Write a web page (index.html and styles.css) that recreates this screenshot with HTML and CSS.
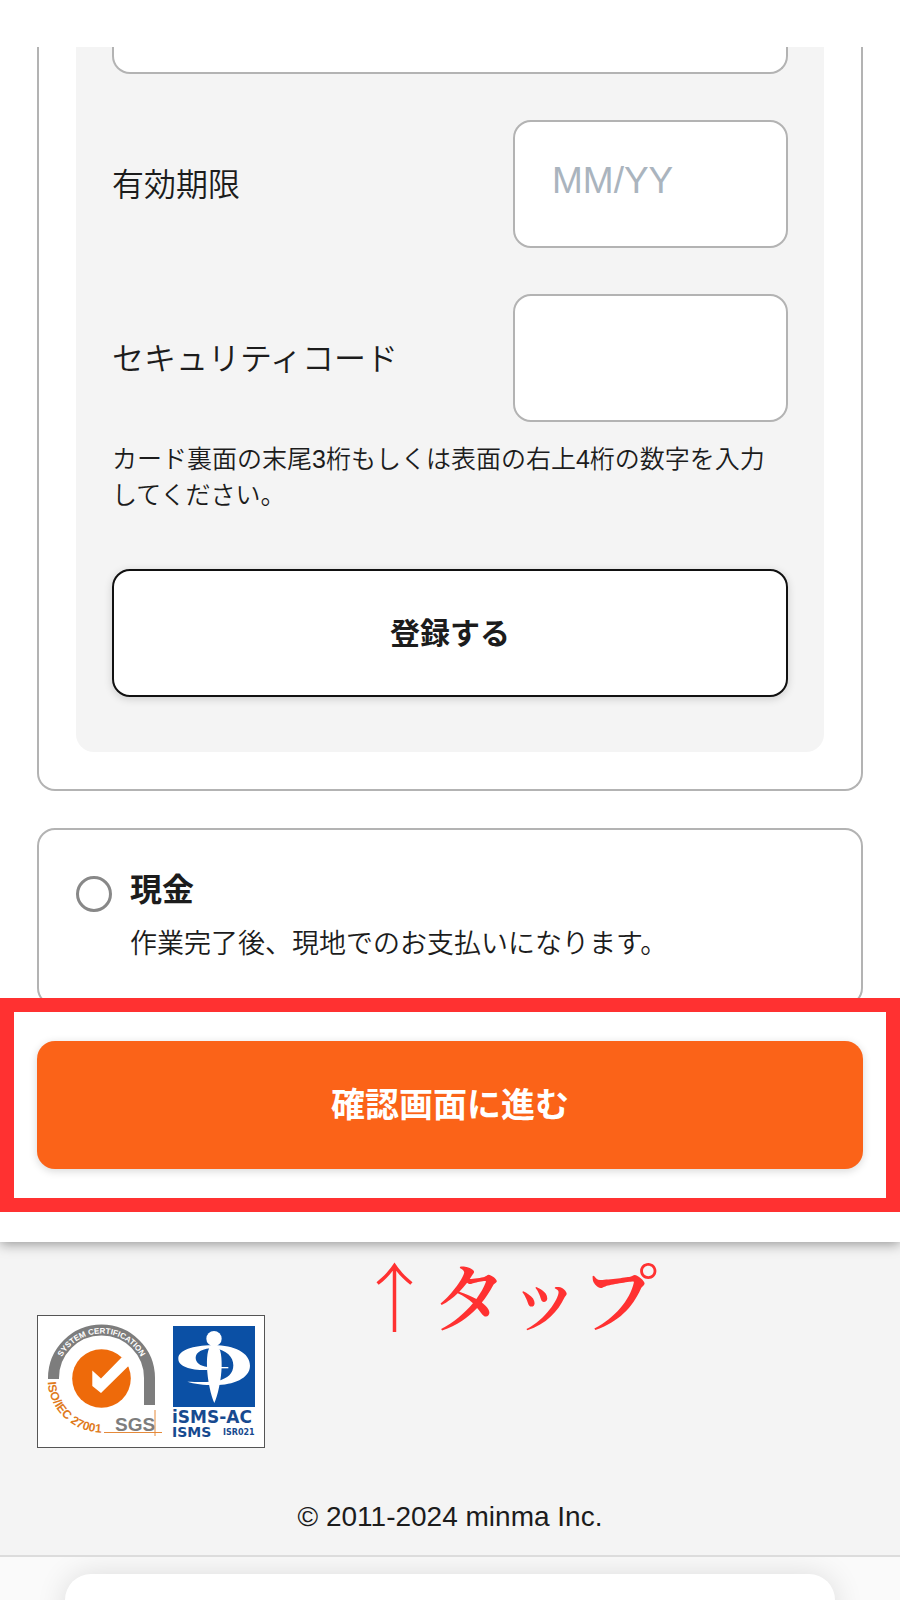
FILE: index.html
```html
<!DOCTYPE html>
<html lang="ja">
<head>
    <meta charset="UTF-8">
    <meta name="viewport" content="width=device-width, initial-scale=1.0">
    <title>お支払い方法</title>
    <link rel="stylesheet" href="styles.css">
</head>
<body>

<main class="payment">
    <form class="methods" id="payment-form">
        <section class="card card-credit">
            <div class="panel">
                <input class="field field-number" type="text" aria-label="カード番号">
                <div class="row">
                    <label for="expiry">有効期限</label>
                    <input class="field" type="text" id="expiry" placeholder="MM/YY">
                </div>
                <div class="row">
                    <label for="code">セキュリティコード</label>
                    <input class="field" type="text" id="code">
                </div>
                <p class="note">カード裏面の末尾3桁もしくは表面の右上4桁の数字を入力してください。</p>
                <button class="btn btn-register" type="button">登録する</button>
            </div>
        </section>

        <section class="card card-cash">
            <input class="radio" type="radio" name="method" id="cash">
            <label class="cash-label" for="cash">
                <span class="cash-title">現金</span>
                <span class="cash-text">作業完了後、現地でのお支払いになります。</span>
            </label>
        </section>
    </form>

    <div class="action-bar">
        <div class="frame">
            <button class="btn btn-next" type="submit" form="payment-form">確認画面に進む</button>
        </div>
    </div>
</main>

<footer class="footer">
    <p class="tap">↑タップ</p>
    <svg class="badge" viewBox="0 0 228 133" role="img" aria-label="ISO/IEC 27001 ISMS">
        <defs>
            <path id="arc-top" d="M19.5 63.5a45 45 0 0 1 90 0"/>
            <path id="arc-bottom" d="M10.7 67a54 54 0 0 0 54 50.5"/>
        </defs>
        <rect x="0.5" y="0.5" width="227" height="132" fill="#fff" stroke="#555"/>

        <!-- SGS -->
        <path d="M16.5 64v-1a48 48 0 0 1 96 0v27" fill="none" stroke="#7d7d7d" stroke-width="11"/>
        <text class="arc-text"><textPath href="#arc-top" startOffset="50%">SYSTEM CERTIFICATION</textPath></text>
        <circle cx="64.5" cy="63.5" r="29.3" fill="#ee6a0a"/>
        <path d="M55.3 55.5l8.7 8 21-21.5 8 7.5-29 28.5-8.7-7z" fill="#fff"/>
        <text class="iso-text"><textPath href="#arc-bottom">ISO/IEC 27001</textPath></text>
        <text class="sgs-text" x="78" y="116">SGS</text>
        <path d="M67 117.5h58M118 95v26" stroke="#e58a3a" fill="none"/>

        <!-- ISMS-AC -->
        <rect x="136" y="11" width="82" height="81" fill="#0b50a5"/>
        <g transform="translate(113 -10) scale(.3333)" fill="#fff">
            <path fill-rule="evenodd" d="M192 121c-60-1-107 14-107 40 0 24 38 35 88 34v-9c-24-3-36-14-36-28 0-18 22-28 55-30z"/>
            <path d="M192 121c60 0 108 22 108 61 0 38-50 58-105 58-34 0-63-3-83-10 30 1 70 2 90-2 32-7 48-23 48-47 0-26-20-45-58-53z"/>
            <path d="M172 186h63v4h-63z"/>
            <path d="M192 118c18 0 24 30 23 66-1 40-12 90-22 110-10-20-21-70-22-110-1-36 4-66 21-66z"/>
            <circle cx="192" cy="101" r="23"/>
        </g>
        <text class="isms-text isms-ac" x="135" y="108">iSMS-AC</text>
        <text class="isms-text isms-sub" x="135" y="122">ISMS</text>
        <text class="isms-text isms-id" x="186" y="120">ISR021</text>
    </svg>
    <p class="copyright">© 2011-2024 minma Inc.</p>
</footer>

<div class="browser-bar">
    <div class="address"></div>
</div>

</body>
</html>
```

FILE: styles.css
```css
* {
    box-sizing: border-box;
}
body {
    margin: 0;
    background: #fff;
    color: #1c1c1c;
    font-family: "Liberation Sans", "Noto Sans CJK JP", sans-serif;
}
p {
    margin: 0;
}
.payment {
    position: relative;
    padding-top: 47px;
    background: #fff;
    box-shadow: 0 2px 12px rgba(0,0,0,0.4);
}
.methods {
    display: flex;
    flex-direction: column;
    gap: 37px;
    padding: 0 37px;
}
.card {
    border: 2px solid #b3b3b3;
    border-radius: 18px;
}

/* credit card */
.card-credit {
    padding: 0 37px 37px;
    border-top: 0;
    border-radius: 0 0 18px 18px;
}
.panel {
    padding: 0 36px 55px;
    background: #f4f4f4;
    border-radius: 0 0 18px 18px;
}
.field {
    width: 275px;
    height: 128px;
    padding: 0 37px 6px;
    background: #fff;
    border: 2px solid #b3b3b3;
    border-radius: 18px;
    font-family: inherit;
    font-size: 37px;
}
.field::placeholder {
    color: #aab4be;
}
.field-number {
    display: block;
    width: 100%;
    height: 27px;
    border-top: 0;
    border-radius: 0 0 18px 18px;
}
.row {
    display: flex;
    align-items: center;
    justify-content: space-between;
    margin-top: 46px;
    font-size: 32px;
    font-weight: 350;
}
.row label {
    padding-bottom: 4px;
}
.note {
    margin: 19px 0 56px;
    font-size: 25px;
    font-weight: 350;
    line-height: 36px;
}
.btn {
    display: block;
    width: 100%;
    height: 128px;
    padding: 0 0 5px;
    border-radius: 18px;
    font-family: inherit;
    font-weight: bold;
    box-shadow: 0 2px 8px rgba(0,0,0,0.16);
}
.btn-register {
    background: #fff;
    border: 2px solid #111;
    color: #1c1c1c;
    font-size: 30px;
}

/* cash */
.card-cash {
    display: flex;
    gap: 18px;
    padding: 38px 37px;
}
.radio {
    appearance: none;
    flex: none;
    width: 36px;
    height: 36px;
    margin: 8px 0 0;
    background: #fff;
    border: 3px solid #888;
    border-radius: 50%;
}
.cash-label {
    display: flex;
    flex-direction: column;
    gap: 10px;
}
.cash-title {
    font-size: 32px;
    font-weight: bold;
    line-height: 44px;
}
.cash-text {
    font-size: 27px;
    font-weight: 350;
    line-height: 44px;
}

/* bottom button */
.action-bar {
    position: relative;
    margin-top: -8px;
    padding-bottom: 30px;
    background: #fff;
}
.frame {
    padding: 29px 23px;
    border: 14px solid #ff3131;
}
.btn-next {
    background: #fb6318;
    border: 0;
    color: #fff;
    font-size: 34px;
}

.footer {
    padding: 0 37px 20px;
    background: #f4f4f4;
}
.tap {
    margin-bottom: -31px;
    padding-left: 320px;
    color: #ff3131;
    font-family: "Noto Serif CJK JP", "Noto Sans CJK JP", serif;
    font-size: 75px;
    font-weight: 600;
    line-height: 104px;
}
.badge {
    display: block;
    width: 228px;
    height: 133px;
}
.arc-text {
    fill: #fff;
    font: bold 8px "Liberation Sans Narrow", "Liberation Sans", sans-serif;
    text-anchor: middle;
}
.iso-text {
    fill: #e07a1c;
    font: bold 12px "Liberation Sans Narrow", "Liberation Sans", sans-serif;
}
.sgs-text {
    fill: #7d7d7d;
    font: bold 19px "Liberation Sans Narrow", "Liberation Sans", sans-serif;
}
.isms-text {
    fill: #174a8f;
    font-family: "DejaVu Sans", sans-serif;
    font-weight: bold;
}
.isms-ac {
    font-size: 17px;
}
.isms-sub {
    font-size: 14px;
}
.isms-id {
    font-size: 8px;
}
.copyright {
    margin-top: 51px;
    font-size: 28px;
    line-height: 36px;
    text-align: center;
}

.browser-bar {
    height: 45px;
    padding: 17px 65px 0;
    background: #fafafa;
    border-top: 2px solid #dcdcdc;
    overflow: hidden;
}
.address {
    height: 80px;
    background: #fff;
    border-radius: 26px;
    box-shadow: 0 0 30px rgba(0,0,0,0.12);
}
```
